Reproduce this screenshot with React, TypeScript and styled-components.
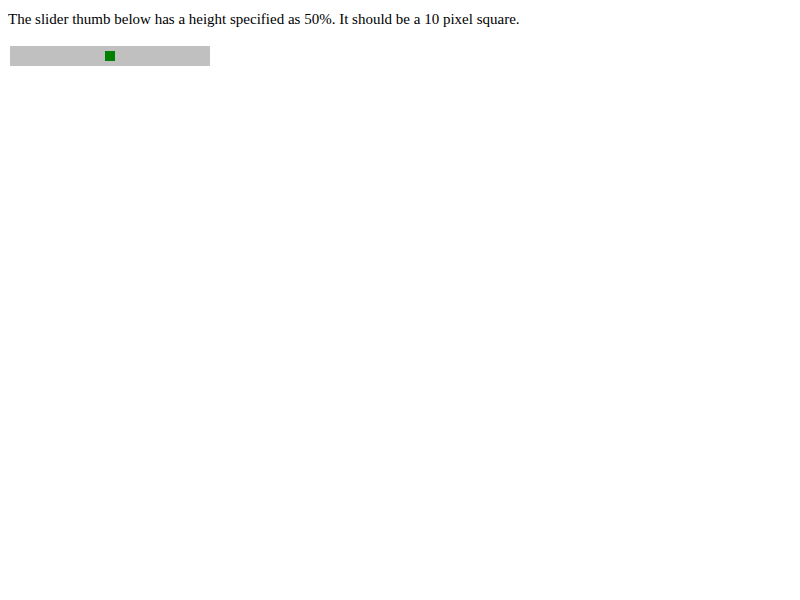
import React from "react";
import styled, { createGlobalStyle } from "styled-components";

const Global = createGlobalStyle`
  html, body { background: #fff; }
  body {
    margin: 8px;
    font-family: "Liberation Serif", "Times New Roman", serif;
    font-size: 15px;
    color: #000;
  }
`;

const Page = styled.div`
  display: flex;
  flex-direction: column;
  align-items: flex-start;
`;

const Note = styled.p`
  margin: 0;
  padding-top: 2px;
  line-height: 18px;
`;

const Track = styled.div`
  margin: 18px 2px 0;
  width: 200px;
  height: 20px;
  background: #c0c0c0;
  display: flex;
  align-items: center;
  justify-content: center;
`;

const Thumb = styled.div`
  width: 10px;
  height: 10px;
  background: #008000;
`;

export default function App() {
  return (
    <Page>
      <Global />
      <Note>
        The slider thumb below has a height specified as 50%. It should be a 10 pixel square.
      </Note>
      <Track role="slider" aria-valuenow={50} aria-valuemin={0} aria-valuemax={100}>
        <Thumb />
      </Track>
    </Page>
  );
}
